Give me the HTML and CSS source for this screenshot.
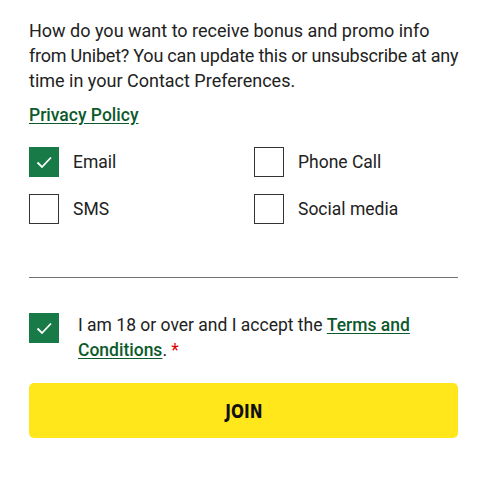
FILE: index.html
```html
<!DOCTYPE html>
<html>
<head>
<meta charset="utf-8">
<link rel="stylesheet" href="styles.css">
</head>
<body>
<div class="form">
  <p class="intro">How do you want to receive bonus and promo info<br><span class="tight">from Unibet? You can update this or unsubscribe at any</span><br>time in your Contact Preferences.</p>
  <a class="link privacy" href="#">Privacy Policy</a>
  <div class="prefs">
    <label class="opt"><span class="box checked"><svg viewBox="0 0 30 30" width="30" height="30"><path d="M8.5 15.5 L13 20 L22 10.5" fill="none" stroke="#fff" stroke-width="1.8"/></svg></span><span>Email</span></label>
    <label class="opt"><span class="box"></span><span>Phone Call</span></label>
    <label class="opt"><span class="box"></span><span>SMS</span></label>
    <label class="opt"><span class="box"></span><span>Social media</span></label>
  </div>
  <hr class="divider">
  <label class="terms"><span class="box checked"><svg viewBox="0 0 30 30" width="30" height="30"><path d="M8.5 15.5 L13 20 L22 10.5" fill="none" stroke="#fff" stroke-width="1.8"/></svg></span><span class="terms-text">I am 18 or over and I accept the <a class="link" href="#">Terms and Conditions</a>. <span class="req">*</span></span></label>
  <button class="join"><span class="join-label">JOIN</span></button>
</div>
</body>
</html>
```
FILE: styles.css
```css
html, body { margin: 0; padding: 0; background: #fff; }
body { font-family: Roboto, "Noto Sans", sans-serif; color: #222; }
.form { width: 429px; padding: 18px 0 0 29px; }
.intro { margin: 0; font-size: 18px; line-height: 25px; color: #222; white-space: nowrap; }
.tight { letter-spacing: -0.22px; }
.link { color: #0c5a2c; font-weight: 500; text-decoration: underline; text-underline-offset: 2px; }
.privacy { display: inline-block; margin-top: 10px; font-size: 17.5px; line-height: 24px; }
.prefs { display: grid; grid-template-columns: 225px 1fr; row-gap: 17px; margin-top: 20px; }
.opt { display: flex; align-items: center; gap: 14px; font-size: 17.5px; }
.box { width: 28px; height: 28px; border: 1px solid #333; display: flex; flex: none; background: #fff; }
.box.checked { background: #177a47; border-color: #177a47; }
.box svg { margin: -1px; }
.divider { margin: 53px 0 0; border: 0; border-top: 1px solid #707070; height: 0; }
.terms { display: flex; align-items: flex-start; gap: 19px; margin-top: 35px; font-size: 17.5px; line-height: 25px; }
.req { color: #e00000; }
.join { display: block; width: 429px; height: 55px; margin-top: 20px; border: 0; border-radius: 5px; background: #ffe71c; font-family: "DejaVu Sans Condensed", "DejaVu Sans", sans-serif; font-weight: bold; font-size: 20px; color: #111; cursor: pointer; }
.join-label { display: inline-block; transform: scaleX(0.85); }
```
